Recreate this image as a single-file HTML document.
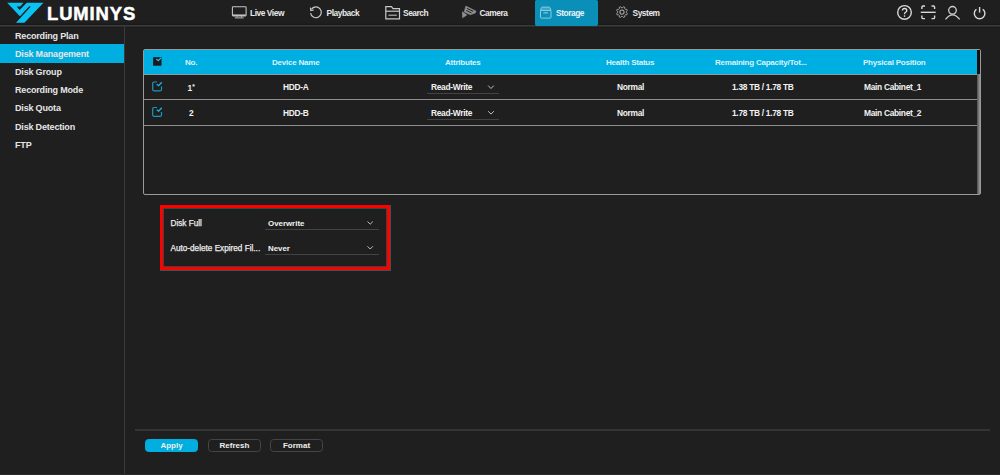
<!DOCTYPE html>
<html><head><meta charset="utf-8">
<style>
*{margin:0;padding:0;box-sizing:border-box}
html,body{width:1000px;height:475px;overflow:hidden;background:#1f1f1f;font-family:"Liberation Sans",sans-serif;color:#e8e8e8}
div,span,svg{position:absolute}
#hdr{left:0;top:0;width:1000px;height:25px;background:linear-gradient(to bottom,#1f1f1f 0,#1f1f1f 23px,#1b1b1b 24px)}
#hline{left:0;top:25px;width:1000px;height:3px;background:linear-gradient(to bottom,#3a3a3a 0,#3a3a3a 1px,#2f2f2f 1px,#2f2f2f 2px,#1b1b1b 2px)}
.nt{top:0;height:26px;line-height:26px;font-size:8.4px;font-weight:bold;color:#e8e8e8;white-space:nowrap;letter-spacing:-0.45px}
#stab{left:535px;top:0;width:63px;height:26px;background:#0a8fb8;border-radius:1.5px 1.5px 2px 2px}
#side{left:124px;top:26px;width:1px;height:449px;background:#3a3a3a}
.si{left:15px;font-size:9px;font-weight:bold;color:#e6e6e6;white-space:nowrap;line-height:18px;letter-spacing:-0.18px}
#sel{left:0;top:44px;width:124px;height:19px;background:#00aee0}
#tbl{left:143px;top:49px;width:838px;height:146px;border:1px solid #9a9a9a;border-radius:2px;background:#1f1f1f}
#thead{left:144px;top:50px;width:833px;height:24px;background:#00afe1}
#scroll{left:977px;top:50px;width:3px;height:144px;background:linear-gradient(to right,#505050,#9a9a9a)}
#scrolltop{left:977px;top:50px;width:3px;height:24px;background:#111}
.sep{left:144px;width:833px;height:1px;background:#8e8e8e}
.th{top:50px;height:24px;line-height:25.6px;font-size:8px;letter-spacing:-0.22px;font-weight:bold;color:#dcf1f8;white-space:nowrap}
.td{letter-spacing:-0.3px;font-size:8.4px;font-weight:bold;color:#f2f2f2;white-space:nowrap;line-height:10px}
.dd{height:1px;background:#434343}
.btn{top:439px;height:13px;width:53px;border:1px solid #454545;border-radius:3.5px;font-size:8px;font-weight:bold;text-align:center;line-height:11.5px;color:#eee}
</style></head><body>
<div id="hdr"></div>
<div id="hline"></div>
<div id="stab"></div>

<!-- logo -->
<svg style="left:0;top:0" width="48" height="26" viewBox="0 0 48 26">
<polygon fill="#0bc3f2" points="7.2,2.8 23.5,2.8 20.3,6.4 16.7,6.4 19.6,9.9 26.7,2.8 43.5,2.8 24.4,22.7 16,22.7 30.9,6.6 29.1,6.6 19.9,16.2"/>
</svg>
<div style="left:47px;top:4px;font-size:18.4px;font-weight:bold;color:#fff;letter-spacing:0.9px;line-height:20px;white-space:nowrap;-webkit-text-stroke:0.5px #fff">LUMINYS</div>

<!-- nav icons -->
<svg style="left:0;top:0" width="1000" height="26" viewBox="0 0 1000 26" fill="none" stroke="#c8c8c8" stroke-width="1.2">
<!-- live view monitor -->
<rect x="232.4" y="6.7" width="13.7" height="9.2" rx="0.8" stroke-width="1.05"/>
<line x1="232.8" y1="15.2" x2="245.7" y2="15.2" stroke-width="1.5"/>
<line x1="234.8" y1="17.9" x2="243.7" y2="17.9" stroke-width="0.9"/>
<line x1="237" y1="16.2" x2="237" y2="17.5" stroke-width="0.7"/>
<line x1="241.5" y1="16.2" x2="241.5" y2="17.5" stroke-width="0.7"/>
<!-- playback -->
<g transform="translate(0.2,0.8)"><path d="M311.2,8.6 A5.4,5.4 0 1 1 310.4,12.3"/>
<path d="M310.2,6.8 L310.6,9.8 L313.6,9.2" stroke-width="1.1"/></g>
<!-- search folder -->
<path d="M385.8,18.8 L385.8,6.7 L391.5,6.7 L393,8.6 L399.5,8.6 L399.5,18.8 Z"/>
<line x1="385.8" y1="11.2" x2="399.5" y2="11.2"/>
<line x1="388.5" y1="15.2" x2="396.8" y2="15.2" stroke-width="1"/>
<!-- system gear -->
<path d="M623.41,6.78 L624.76,7.34 L624.67,8.60 L625.50,9.43 L626.76,9.34 L627.32,10.69 L626.36,11.51 L626.36,12.69 L627.32,13.51 L626.76,14.86 L625.50,14.77 L624.67,15.60 L624.76,16.86 L623.41,17.42 L622.59,16.46 L621.41,16.46 L620.59,17.42 L619.24,16.86 L619.33,15.60 L618.50,14.77 L617.24,14.86 L616.68,13.51 L617.64,12.69 L617.64,11.51 L616.68,10.69 L617.24,9.34 L618.50,9.43 L619.33,8.60 L619.24,7.34 L620.59,6.78 L621.41,7.74 L622.59,7.74 Z" stroke-linejoin="round" stroke="#aaaaaa" stroke-width="1"/>
<circle cx="622" cy="12.1" r="2.1" stroke="#aaaaaa" stroke-width="1.1"/>
<!-- help -->
<circle cx="904.5" cy="12.4" r="6.8" stroke="#d8d8d8" stroke-width="1.4"/>
<path d="M902.4,10.4 Q902.4,8.5 904.6,8.5 Q906.8,8.5 906.8,10.4 Q906.8,11.6 905.5,12.3 Q904.5,12.9 904.5,14.2" stroke="#e0e0e0" stroke-width="1.3"/>
<circle cx="904.5" cy="16.1" r="0.8" fill="#e0e0e0" stroke="none"/>
<!-- scan -->
<g stroke="#d8d8d8" stroke-width="1.4">
<path d="M921.9,9 V7.2 Q921.9,6 923.1,6 H925"/>
<path d="M931.5,6 H933.4 Q934.6,6 934.6,7.2 V9"/>
<path d="M921.9,15.6 V17.4 Q921.9,18.6 923.1,18.6 H925"/>
<path d="M931.5,18.6 H933.4 Q934.6,18.6 934.6,17.4 V15.6"/>
<line x1="920.8" y1="12.3" x2="935.7" y2="12.3"/>
</g>
<!-- user -->
<circle cx="952.5" cy="10.3" r="3.8" stroke="#d0d0d0" stroke-width="1.3"/>
<path d="M945.5,19.4 Q952.5,10.5 959.7,19.4" stroke="#d0d0d0" stroke-width="1.2"/>
<!-- power -->
<path d="M976.4,9.2 A5.3,5.3 0 1 0 982.8,9.2" stroke="#d8d8d8" stroke-width="1.4"/>
<line x1="979.6" y1="7" x2="979.6" y2="12.6" stroke="#d8d8d8" stroke-width="1.4"/>
</svg>
<!-- camera icon -->
<svg style="left:456px;top:0" width="26" height="26" viewBox="0 0 26 26" fill="#8e8e8e">
<path d="M9.9,6.1 L20.1,11.2 L19.2,13.1 L14.4,14.7 L8.2,11.9 Z" stroke="#8e8e8e" stroke-width="0.6" stroke-linejoin="round"/>
<path d="M10.9,8.4 L17.2,11.3" stroke="#1c1c1c" stroke-width="1"/>
<path d="M10.2,10.5 L15.6,13" stroke="#1c1c1c" stroke-width="0.9"/>
<path d="M6,11.2 L6.3,18.2 L11.3,15.1 Z"/>
</svg>
<!-- storage icon -->
<svg style="left:532px;top:0" width="26" height="26" viewBox="0 0 26 26" fill="none" stroke="#8ccbe0" stroke-width="1">
<rect x="8.5" y="10.5" width="10.5" height="7.6" rx="0.8"/>
<path d="M8.5,10.5 L9.3,8 Q9.6,7.1 10.6,7.1 H16.9 Q17.9,7.1 18.2,8 L19,10.5 Z" fill="rgba(200,235,248,0.25)"/>
<rect x="11.4" y="12.3" width="4.6" height="1.1" fill="#8ccbe0" stroke="none"/>
</svg>

<div class="nt" style="left:250px">Live View</div>
<div class="nt" style="left:326.5px">Playback</div>
<div class="nt" style="left:403px">Search</div>
<div class="nt" style="left:479.5px">Camera</div>
<div class="nt" style="left:556px;color:#e6f4f9">Storage</div>
<div class="nt" style="left:632.5px">System</div>

<!-- sidebar -->
<div id="side"></div>
<div id="sel"></div>
<div class="si" style="top:26.5px">Recording Plan</div>
<div class="si" style="top:44.6px">Disk Management</div>
<div class="si" style="top:62.8px">Disk Group</div>
<div class="si" style="top:81.1px">Recording Mode</div>
<div class="si" style="top:99.1px">Disk Quota</div>
<div class="si" style="top:117.6px">Disk Detection</div>
<div class="si" style="top:135.5px">FTP</div>

<!-- table -->
<div id="tbl"></div>
<div id="thead"></div>
<div style="left:144px;top:74px;width:833px;height:1px;background:#8a9ea4"></div>
<div id="scroll"></div>
<div id="scrolltop"></div>
<div class="sep" style="top:99px"></div>
<div class="sep" style="top:125px"></div>

<svg style="left:148px;top:52px" width="20" height="70" viewBox="0 0 20 70">
<rect x="5.1" y="5.2" width="8.4" height="8.5" fill="#1c1a1a"/>
<path d="M8.2,7.1 L10.3,8.7 L13,5.9" fill="none" stroke="#22c4f2" stroke-width="1.2"/>
<path d="M9,30 H5.9 Q4.7,30 4.7,31.2 V37.6 Q4.7,38.8 5.9,38.8 H12.3 Q13.5,38.8 13.5,37.6 V34.4" fill="none" stroke="#1a98c0" stroke-width="1.2"/>
<path d="M8.7,32.3 L10.6,33.7 L13.8,30.2" fill="none" stroke="#18b6e6" stroke-width="1.3"/>
<g transform="translate(0,25.5)">
<path d="M9,30 H5.9 Q4.7,30 4.7,31.2 V37.6 Q4.7,38.8 5.9,38.8 H12.3 Q13.5,38.8 13.5,37.6 V34.4" fill="none" stroke="#1a98c0" stroke-width="1.2"/>
<path d="M8.7,32.3 L10.6,33.7 L13.8,30.2" fill="none" stroke="#18b6e6" stroke-width="1.3"/>
</g>
</svg>
<div class="th" style="left:185px">No.</div>
<div class="th" style="left:272px">Device Name</div>
<div class="th" style="left:445px">Attributes</div>
<div class="th" style="left:606px">Health Status</div>
<div class="th" style="left:715px">Remaining Capacity/Tot...</div>
<div class="th" style="left:863px">Physical Position</div>

<div class="td" style="left:187.5px;top:81.8px">1<span style="position:static;font-size:6.5px;vertical-align:1.5px;margin-left:0.3px">*</span></div>
<div class="td" style="left:283px;top:81.8px">HDD-A</div>
<div class="td" style="left:431px;top:81.8px">Read-Write</div>
<div class="dd" style="left:427px;top:93px;width:72px"></div>
<div class="td" style="left:617px;top:81.8px">Normal</div>
<div class="td" style="left:732px;top:81.8px">1.38 TB / 1.78 TB</div>
<div class="td" style="left:864px;top:81.8px">Main Cabinet_1</div>

<div class="td" style="left:189px;top:107.7px">2</div>
<div class="td" style="left:283px;top:107.7px">HDD-B</div>
<div class="td" style="left:431px;top:107.7px">Read-Write</div>
<div class="dd" style="left:427px;top:119px;width:72px"></div>
<div class="td" style="left:617px;top:107.7px">Normal</div>
<div class="td" style="left:732px;top:107.7px">1.78 TB / 1.78 TB</div>
<div class="td" style="left:864px;top:107.7px">Main Cabinet_2</div>

<svg style="left:0;top:0" width="1000" height="475" viewBox="0 0 1000 475" fill="none" stroke="#cfcfcf" stroke-width="0.9">
<path d="M488.2,85.6 L491,88.5 L493.8,85.6"/>
<path d="M488.2,111.2 L491,114.1 L493.8,111.2"/>
<path d="M367.5,221.5 L370.2,224.2 L372.9,221.5"/>
<path d="M367.5,246.3 L370.2,249 L372.9,246.3"/>
</svg>

<!-- form box -->
<div style="left:160px;top:205px;width:231px;height:66px;border:1px solid #46504f"></div>
<div style="left:160px;top:205px;width:230px;height:65px;border:3px solid #ff0000"></div>
<div style="left:163px;top:208px;width:224px;height:59px;border:1px solid #384542"></div>
<div class="td" style="left:170.5px;top:218.7px;font-size:8.2px;font-weight:normal;letter-spacing:0;-webkit-text-stroke:0.25px #ececec;color:#ececec">Disk Full</div>
<div class="td" style="left:170.5px;top:244px;font-size:8.2px;font-weight:normal;letter-spacing:0;-webkit-text-stroke:0.25px #ececec;color:#ececec">Auto-delete Expired Fil...</div>
<div class="td" style="left:268px;top:218.5px;font-size:7.9px;letter-spacing:0">Overwrite</div>
<div class="td" style="left:268px;top:243.6px;font-size:7.9px;letter-spacing:0">Never</div>
<div class="dd" style="left:264.5px;top:229px;width:114px"></div>
<div class="dd" style="left:264.5px;top:254px;width:114px"></div>

<!-- bottom -->
<div style="left:0;top:474px;width:1000px;height:1px;background:#2b2b2b"></div>
<div style="left:135px;top:429px;width:855px;height:2px;background:#343434"></div>
<div class="btn" style="left:145px;background:#00aee0;border-color:#00aee0">Apply</div>
<div class="btn" style="left:208px">Refresh</div>
<div class="btn" style="left:270px">Format</div>
</body></html>
